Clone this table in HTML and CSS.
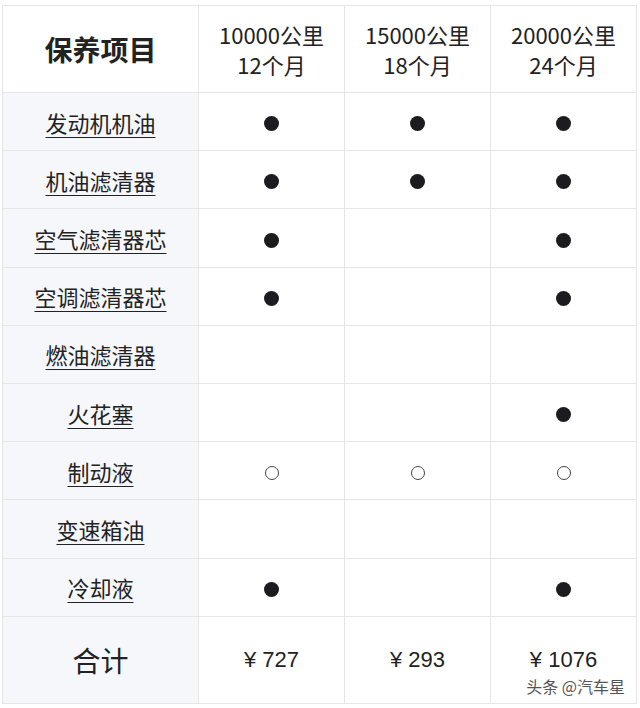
FILE: index.html
```html
<!DOCTYPE html>
<html lang="zh">
<head>
<meta charset="utf-8">
<link rel="stylesheet" href="styles.css">
</head>
<body>
<div class="wrap">
<table class="tbl">
  <tr class="head">
    <th class="label title">保养项目</th>
    <th>10000公里<br>12个月</th>
    <th>15000公里<br>18个月</th>
    <th>20000公里<br>24个月</th>
  </tr>
  <tr><td class="label"><u>发动机机油</u></td><td><span class="dot"></span></td><td><span class="dot"></span></td><td><span class="dot"></span></td></tr>
  <tr><td class="label"><u>机油滤清器</u></td><td><span class="dot"></span></td><td><span class="dot"></span></td><td><span class="dot"></span></td></tr>
  <tr><td class="label"><u>空气滤清器芯</u></td><td><span class="dot"></span></td><td></td><td><span class="dot"></span></td></tr>
  <tr><td class="label"><u>空调滤清器芯</u></td><td><span class="dot"></span></td><td></td><td><span class="dot"></span></td></tr>
  <tr><td class="label"><u>燃油滤清器</u></td><td></td><td></td><td></td></tr>
  <tr><td class="label"><u>火花塞</u></td><td></td><td></td><td><span class="dot"></span></td></tr>
  <tr><td class="label"><u>制动液</u></td><td><span class="ring"></span></td><td><span class="ring"></span></td><td><span class="ring"></span></td></tr>
  <tr><td class="label"><u>变速箱油</u></td><td></td><td></td><td></td></tr>
  <tr><td class="label"><u>冷却液</u></td><td><span class="dot"></span></td><td></td><td><span class="dot"></span></td></tr>
  <tr class="total">
    <td class="label title2">合计</td>
    <td>¥ 727</td>
    <td>¥ 293</td>
    <td class="last">¥ 1076<span class="mark">头条 @汽车星</span></td>
  </tr>
</table>
</div>
</body>
</html>
```
FILE: styles.css
```css
html, body {
  margin: 0;
  padding: 0;
  background: #ffffff;
}
.wrap {
  padding: 5px 3px 0 2px;
  width: 640px;
  box-sizing: border-box;
}
.tbl {
  border-collapse: collapse;
  table-layout: fixed;
  width: 635px;
  font-family: "Noto Sans CJK SC", "Liberation Sans", sans-serif;
  color: #222222;
}
.tbl th, .tbl td {
  border: 1px solid #e6e6e8;
  text-align: center;
  vertical-align: middle;
  padding: 0;
  font-weight: 400;
  font-size: 22px;
  line-height: 30px;
}
.tbl th:nth-child(1), .tbl td:nth-child(1) { width: 195px; }
.tbl th:nth-child(n+2), .tbl td:nth-child(n+2) { width: 145px; }
.tbl tr { height: 58.2px; }
.tbl tr.head { height: 87px; }
.tbl tr.total { height: 87px; }
.label {
  background: #f6f7fb;
}
.head .label { background: #ffffff; }
.title {
  font-size: 28px !important;
  font-weight: 700 !important;
}
.title2 {
  font-size: 28px !important;
  font-weight: 500;
}
.label u {
  text-decoration: underline;
  text-decoration-thickness: 1px;
  text-underline-offset: 5px;
}
.dot {
  display: inline-block;
  width: 15px;
  height: 15px;
  border-radius: 50%;
  background: #1c1c1e;
  vertical-align: middle;
  position: relative;
  top: -2px;
}
.ring {
  display: inline-block;
  width: 12px;
  height: 12px;
  border-radius: 50%;
  border: 1px solid #444;
  vertical-align: middle;
  position: relative;
  top: -2px;
}
.total td { font-family: "Liberation Sans", "Noto Sans CJK SC", sans-serif; }
.total td.label { font-family: "Noto Sans CJK SC", sans-serif; }
.last { position: relative; }
.mark {
  position: absolute;
  right: 11px;
  bottom: 8px;
  font-family: "Noto Sans CJK SC", sans-serif;
  font-size: 16px;
  line-height: 18px;
  color: #555;
  text-shadow: 0 0 2px #fff, 0 0 2px #fff;
}
```
